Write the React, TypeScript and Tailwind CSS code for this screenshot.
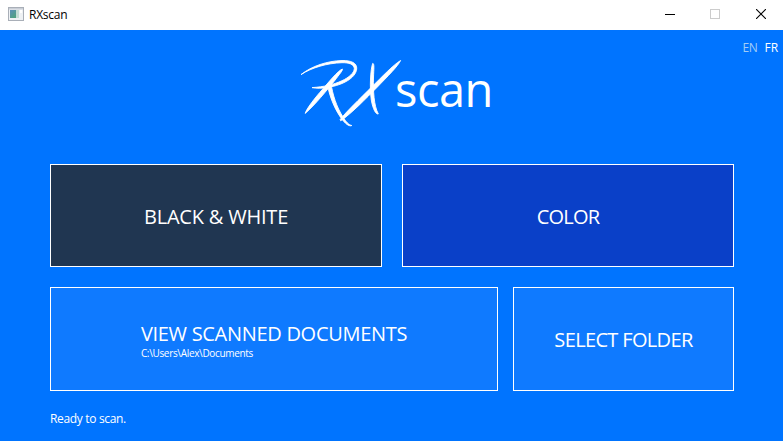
import type { ReactNode } from "react";

function AppIcon() {
  return (
    <svg width="16" height="14" viewBox="0 0 16 14" className="block">
      <defs>
        <linearGradient id="pane" x1="0" y1="0" x2="0.6" y2="1">
          <stop offset="0" stopColor="#5b8fb9" />
          <stop offset="1" stopColor="#4fa182" />
        </linearGradient>
      </defs>
      <rect x="0.5" y="0.5" width="15" height="13" fill="#eef1f4" stroke="#a9afb8" />
      <rect x="1" y="1" width="14" height="1.5" fill="#c9ced6" />
      <rect x="2" y="3" width="6" height="8" fill="url(#pane)" />
      <rect x="8" y="3" width="3" height="8" fill="#c3dcd4" />
      <rect x="12" y="3" width="2" height="3" fill="#ffffff" />
    </svg>
  );
}

function WindowControls() {
  return (
    <div className="flex items-center">
      <svg width="10" height="10" viewBox="0 0 10 10" shapeRendering="crispEdges">
        <rect y="5" width="10" height="1" fill="#000" />
      </svg>
      <svg className="ml-[35px]" width="10" height="10" viewBox="0 0 10 10" shapeRendering="crispEdges">
        <rect x="0.5" y="0.5" width="9" height="9" fill="none" stroke="#ccc" />
      </svg>
      <svg className="ml-[36px]" width="10" height="10" viewBox="0 0 10 10">
        <path d="M0 0L10 10M10 0L0 10" stroke="#000" strokeWidth="1.1" />
      </svg>
    </div>
  );
}

function Signature() {
  return (
    <svg
      width="102"
      height="68"
      viewBox="0 0 102 68"
      fill="#fff"
      stroke="#fff"
      strokeWidth="0.9"
      strokeLinejoin="round"
      className="block overflow-visible"
    >
      <path d="M1 14.6C12 6 27 1 42 0.5C51 0.3 57.3 3 56.7 9C55.5 18.5 42 25 29 27.2C22 28.5 16 28.5 12 27.6C24 26.9 34 24.5 42 20.7C49 17.5 54.3 12.8 54.3 8.5C54 4.2 49 2.6 42 2.7C27 3.2 12 7.5 1 14.6Z" />
      <path d="M42.4 9C43 10.5 38.7 15 35.2 20C27 30 15 45 5.2 53.4C6.3 49 14.8 38 22.8 29C28.8 22 38 10.7 42.4 9Z" />
      <path d="M27.2 24L31 23.5C32.5 34 36.5 47 43 57C46 62 49 65 51.8 65.5C50 66.6 46.5 65 42.5 60C35 50 30 38 27.2 24Z" />
      <path d="M100.6 0.5C98 6 88 16 77.2 27.2C65.2 39.2 52 53 40.7 60.8L40.2 59.5C46 52 59.8 38.8 71.8 26.8C82 17 93 5 100.6 0.5Z" />
      <path d="M72.7 3.4C74.5 3.5 73.8 9 73.5 17C73 31 74 46 78.3 53.9C76 54.8 72.8 49 71.3 40C69.5 27 70.5 9.2 72.7 3.4Z" />
    </svg>
  );
}

function Tile({ className, children }: { className: string; children: ReactNode }) {
  return (
    <button
      className={`flex items-center justify-center border border-white text-[20px] leading-[26px] whitespace-nowrap ${className}`}
    >
      {children}
    </button>
  );
}

export default function App() {
  return (
    <div className="flex h-[441px] w-[783px] flex-col overflow-hidden bg-[#0074ff] font-['Open_Sans','Noto_Sans',sans-serif] text-white">
      <header className="flex h-[30px] shrink-0 items-center justify-between bg-white pr-[17px] pb-[2px] pl-2 text-black">
        <div className="flex items-center gap-[5px]">
          <AppIcon />
          <span className="pt-px text-[12px] leading-4 tracking-[-0.25px]">RXscan</span>
        </div>
        <WindowControls />
      </header>

      <nav className="flex h-[30px] shrink-0 justify-end gap-[7px] pt-[9px] pr-[5px] text-[12px] leading-[18px]">
        <span className="tracking-[-0.3px] text-[#a3cdf5]">EN</span>
        <span className="tracking-[-0.1px]">FR</span>
      </nav>

      <div className="flex h-[104px] shrink-0 pl-[300px]">
        <Signature />
        <h1 className="-ml-[7px] text-[47px] leading-[58px] tracking-[-0.5px]">scan</h1>
      </div>

      <main className="flex flex-col gap-5 pr-[49px] pl-[50px]">
        <div className="flex gap-5">
          <Tile className="h-[103px] w-[332px] bg-[#203651] pt-[3px]">
            <span className="tracking-[-0.2px]">BLACK &amp; WHITE</span>
          </Tile>
          <Tile className="h-[103px] w-[332px] bg-[#0a40c8] pt-[3px]">
            <span className="tracking-[-0.75px]">COLOR</span>
          </Tile>
        </div>
        <div className="flex gap-[15px]">
          <Tile className="h-[104px] w-[448px] bg-[#0f7aff] pt-px">
            <span className="flex flex-col items-start">
              <span className="tracking-[-0.3px]">VIEW SCANNED DOCUMENTS</span>
              <span className="text-[10px] leading-3 font-medium tracking-[-0.33px]">
                C:\Users\Alex\Documents
              </span>
            </span>
          </Tile>
          <Tile className="h-[104px] w-[221px] bg-[#0f7aff] pt-px">
            <span className="tracking-[-0.65px]">SELECT FOLDER</span>
          </Tile>
        </div>
      </main>

      <footer className="pt-[19px] pl-[50px] text-[12px] leading-[18px] tracking-[-0.33px]">
        Ready to scan.
      </footer>
    </div>
  );
}
